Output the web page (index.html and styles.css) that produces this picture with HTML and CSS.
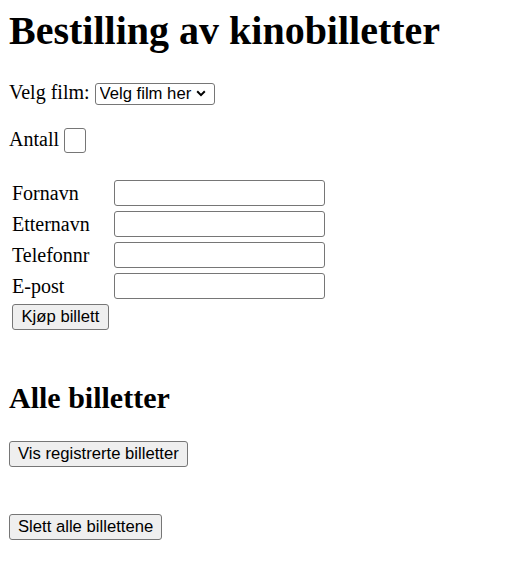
FILE: index.html
```html
<!DOCTYPE html>
<html lang="no">
<head>
<meta charset="utf-8">
<title>Bestilling av kinobilletter</title>
<link rel="stylesheet" href="styles.css">
</head>
<body>
<h1 class="title">Bestilling av kinobilletter</h1>
<div class="row row-film">
  <label for="film">Velg film:</label>
  <select id="film" class="select">
    <option>Velg film her</option>
  </select>
</div>
<div class="row row-antall">
  <label for="antall">Antall</label>
  <input id="antall" class="input input-small" type="text">
</div>
<div class="form-grid">
  <label for="fornavn">Fornavn</label>
  <input id="fornavn" class="input input-wide" type="text">
  <label for="etternavn">Etternavn</label>
  <input id="etternavn" class="input input-wide" type="text">
  <label for="telefonnr">Telefonnr</label>
  <input id="telefonnr" class="input input-wide" type="text">
  <label for="epost">E-post</label>
  <input id="epost" class="input input-wide" type="text">
</div>
<button class="btn btn-buy" type="button">Kjøp billett</button>
<h2 class="subtitle">Alle billetter</h2>
<button class="btn btn-show" type="button">Vis registrerte billetter</button>
<button class="btn btn-delete" type="button">Slett alle billettene</button>
</body>
</html>
```
FILE: styles.css
```css
html, body {
  background: #ffffff;
}
body {
  margin: 0;
  padding: 0 9px;
  font-family: "Liberation Serif", "Times New Roman", serif;
  font-size: 20px;
  line-height: 24px;
  color: #000000;
}
.title {
  font-size: 40px;
  line-height: 46px;
  font-weight: bold;
  margin: 8px 0 0;
}
.row {
  display: flex;
  align-items: baseline;
  gap: 5px;
}
.row-film {
  margin-top: 26px;
}
.row-antall {
  margin-top: 22px;
}
.select {
  -webkit-appearance: none;
  appearance: none;
  font-family: "Liberation Sans", Arial, sans-serif;
  font-size: 16.67px;
  height: 22px;
  width: 120px;
  border: 1px solid #767676;
  border-radius: 3px;
  color: #000000;
  padding: 0 20px 0 4px;
  background-color: #ffffff;
  background-image: url("data:image/svg+xml;utf8,<svg xmlns='http://www.w3.org/2000/svg' width='10' height='7' viewBox='0 0 10 7'><path d='M1.2 1.3 L5 5.1 L8.8 1.3' fill='none' stroke='black' stroke-width='2'/></svg>");
  background-repeat: no-repeat;
  background-position: right 8px center;
  background-size: 10px 7px;
}
.input {
  font-family: "Liberation Sans", Arial, sans-serif;
  font-size: 16.67px;
  border: 1px solid #767676;
  border-radius: 3px;
  background: #ffffff;
  padding: 0 3px;
  box-sizing: border-box;
  margin: 0;
}
.input-small {
  width: 22px;
  height: 25px;
}
.input-wide {
  width: 211px;
  height: 26px;
}
.form-grid {
  display: grid;
  grid-template-columns: 102px 211px;
  row-gap: 5px;
  align-items: center;
  margin: 27px 0 0 3px;
}
.btn {
  display: block;
  font-family: "Liberation Sans", Arial, sans-serif;
  font-size: 16.67px;
  height: 26px;
  padding: 0 8px;
  border: 1px solid #767676;
  border-radius: 3px;
  background: #efefef;
  color: #000000;
  box-sizing: border-box;
  margin: 0;
}
.btn-buy {
  margin: 5px 0 0 3px;
  padding: 0 8.5px;
}
.subtitle {
  font-size: 30px;
  line-height: 34px;
  font-weight: bold;
  margin: 51px 0 0;
}
.btn-show {
  margin-top: 26px;
}
.btn-delete {
  margin-top: 47px;
}
```
